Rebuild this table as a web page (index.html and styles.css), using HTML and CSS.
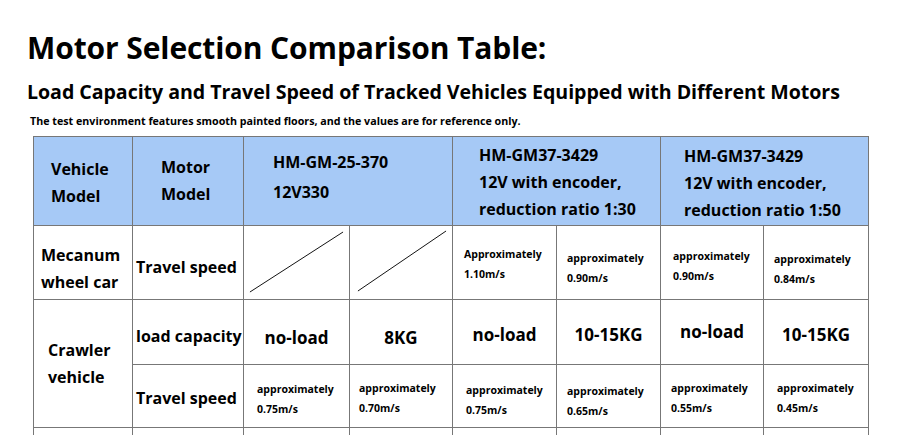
FILE: index.html
```html
<!DOCTYPE html>
<html>
<head>
<meta charset="utf-8">
<link rel="stylesheet" href="styles.css">
</head>
<body>
<div class="page">
  <h1 class="title">Motor Selection Comparison Table:</h1>
  <h2 class="subtitle">Load Capacity and Travel Speed of Tracked Vehicles Equipped with Different Motors</h2>
  <p class="note">The test environment features smooth painted floors, and the values are for reference only.</p>
  <table class="cmp">
    <colgroup>
      <col class="c1"><col class="c2"><col class="c3"><col class="c4"><col class="c5"><col class="c6"><col class="c7"><col class="c8">
    </colgroup>
    <tr class="head">
      <th class="h-veh"><div>Vehicle<br>Model</div></th>
      <th class="h-mot"><div>Motor<br>Model</div></th>
      <th colspan="2" class="h-m1"><div>HM-GM-25-370<br>12V330</div></th>
      <th colspan="2" class="h-m2"><div>HM-GM37-3429<br>12V with encoder,<br>reduction ratio 1:30</div></th>
      <th colspan="2" class="h-m3"><div>HM-GM37-3429<br>12V with encoder,<br>reduction ratio 1:50</div></th>
    </tr>
    <tr class="r-mec">
      <td class="veh mec"><div class="m12">Mecanum<br>wheel car</div></td>
      <td class="lbl"><div class="m8">Travel speed</div></td>
      <td class="na"><svg class="slash" viewBox="0 0 106 73" preserveAspectRatio="none"><line x1="6" y1="66" x2="100" y2="6"/></svg></td>
      <td class="na"><svg class="slash" viewBox="0 0 103 73" preserveAspectRatio="none"><line x1="8" y1="65" x2="97" y2="5"/></svg></td>
      <td class="sm p11"><div class="m3">Approximately<br>1.10m/s</div></td>
      <td class="sm p10"><div class="m10">approximately<br>0.90m/s</div></td>
      <td class="sm p12"><div class="m6">approximately<br>0.90m/s</div></td>
      <td class="sm p10"><div class="m12">approximately<br>0.84m/s</div></td>
    </tr>
    <tr class="r-load">
      <td class="veh crawl" rowspan="2"><div>Crawler<br>vehicle</div></td>
      <td class="lbl"><div class="m8">load capacity</div></td>
      <td class="big"><div class="m10">no-load</div></td>
      <td class="big"><div class="m10">8KG</div></td>
      <td class="big"><div class="m4">no-load</div></td>
      <td class="big"><div class="m4">10-15KG</div></td>
      <td class="big"><div class="b2">no-load</div></td>
      <td class="big"><div class="m4">10-15KG</div></td>
    </tr>
    <tr class="r-spd">
      <td class="lbl"><div class="m4">Travel speed</div></td>
      <td class="sm p13"><div class="m5">approximately<br>0.75m/s</div></td>
      <td class="sm p9"><div class="m3">approximately<br>0.70m/s</div></td>
      <td class="sm p13"><div class="m7">approximately<br>0.75m/s</div></td>
      <td class="sm p10"><div class="m10">approximately<br>0.65m/s</div></td>
      <td class="sm p10"><div class="m4">approximately<br>0.55m/s</div></td>
      <td class="sm p13"><div class="m3">approximately<br>0.45m/s</div></td>
    </tr>
    <tr class="r-more">
      <td></td><td></td><td></td><td></td><td></td><td></td><td></td><td></td>
    </tr>
  </table>
</div>
</body>
</html>
```
FILE: styles.css
```css
html, body {
  margin: 0;
  padding: 0;
  background: #ffffff;
}
body {
  font-family: "Open Sans", "Noto Sans", "DejaVu Sans", sans-serif;
  color: #000;
  overflow: hidden;
  width: 900px;
  height: 435px;
}
.page {
  padding: 27px 0 0 27px;
}
.title {
  margin: 0;
  font-size: 30px;
  font-weight: 700;
  line-height: 42px;
  letter-spacing: -0.1px;
}
.subtitle {
  margin: 10px 0 0 0;
  font-size: 19.6px;
  font-weight: 700;
  line-height: 26px;
  letter-spacing: -0.05px;
}
.note {
  margin: 8px 0 0 3px;
  font-size: 10.7px;
  font-weight: 700;
  line-height: 16px;
}
.cmp {
  margin: 7px 0 0 6px;
  border-collapse: collapse;
  table-layout: fixed;
  width: 835px;
}
.c1 { width: 99px; }
.c2 { width: 111px; }
.c3 { width: 106px; }
.c4 { width: 103px; }
.c5 { width: 104px; }
.c6 { width: 104px; }
.c7 { width: 103px; }
.c8 { width: 105px; }
.cmp th, .cmp td {
  border: 1.5px solid #777777;
  padding: 0;
  font-weight: 700;
  text-align: left;
  vertical-align: middle;
}
.head th {
  background: #a6c9f6;
  height: 88px;
  font-size: 16px;
  line-height: 27px;
}
.h-veh div { padding-left: 17px; margin-top: 4px; }
.h-mot div { padding-left: 28px; margin-top: 0; }
.h-m1 div { padding-left: 29px; margin-top: -8px; line-height: 30px; }
.h-m2 div { padding-left: 26px; margin-top: 2px; }
.h-m3 div { padding-left: 23px; margin-top: 4px; }

.r-mec td { height: 73px; }
.r-load td { height: 64px; }
.r-spd td { height: 62px; }
.r-more td { height: 20px; }

.veh {
  font-size: 16px;
  line-height: 27px;
}
.mec { padding-left: 7px !important; }
.crawl { padding-left: 14px !important; }
.lbl {
  font-size: 16px;
  padding-left: 3px !important;
  white-space: nowrap;
}
.slash {
  display: block;
  width: 100%;
  height: 73px;
}
.slash line {
  stroke: #111;
  stroke-width: 1;
}
.sm {
  font-size: 10.5px;
  line-height: 20px;
}
.p9 { padding-left: 9px !important; }
.p10 { padding-left: 10px !important; }
.p11 { padding-left: 11px !important; }
.p12 { padding-left: 12px !important; }
.p13 { padding-left: 13px !important; }
.big {
  font-size: 17px;
  text-align: center !important;
}
.m3 { margin-top: 3px; }
.m4 { margin-top: 4px; }
.m5 { margin-top: 5px; }
.m6 { margin-top: 6px; }
.m7 { margin-top: 7px; }
.m8 { margin-top: 8px; }
.m10 { margin-top: 10px; }
.m12 { margin-top: 12px; }
.b2 { margin-bottom: 2px; }
```
